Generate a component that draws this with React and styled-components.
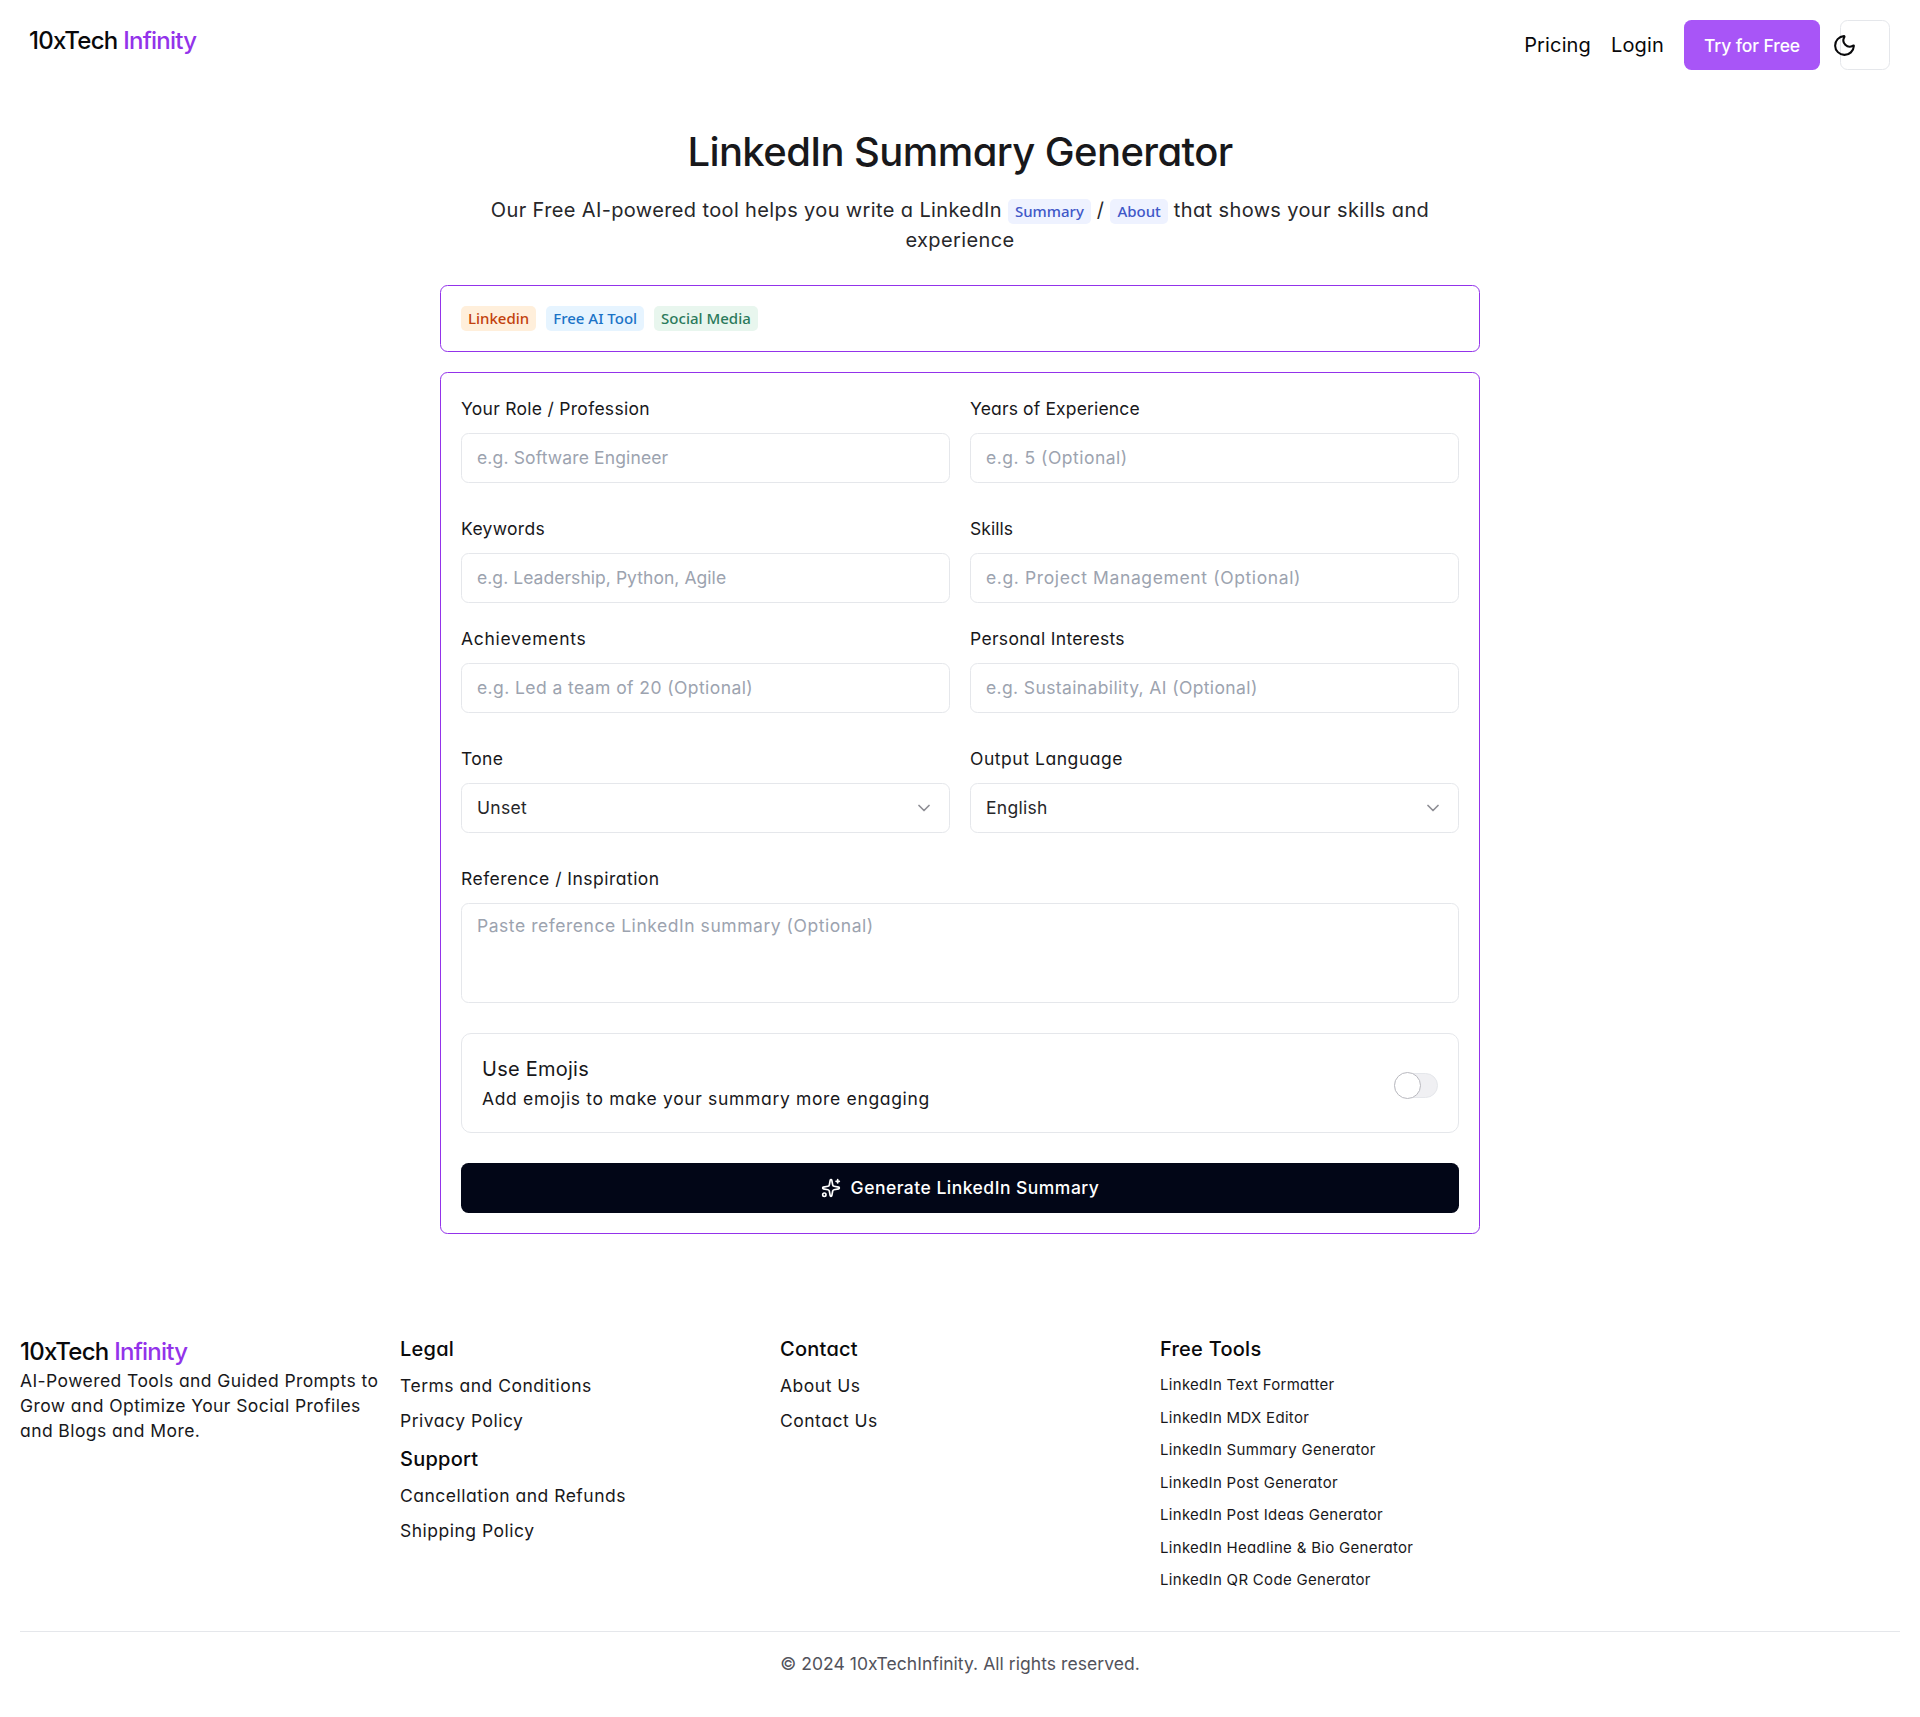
import React from "react";
import styled, { createGlobalStyle } from "styled-components";
import { Moon, ChevronDown, Sparkles } from "lucide-react";

const Global = createGlobalStyle`
  * { box-sizing: border-box; }
  html, body { margin: 0; padding: 0; background: #fff; }
  body { font-family: Inter, "Open Sans", sans-serif; color: #09090b; font-size: 17.5px; font-feature-settings: "cv11" 1; }
  button, input, textarea { font-feature-settings: "cv11" 1; }
`;

const Page = styled.div`display: flex; flex-direction: column; min-height: 1717px;`;

const Nav = styled.header`
  display: flex; justify-content: space-between; align-items: flex-start;
  height: 90px; padding: 20px 30px 20px 29px;
`;
const Brand = styled.div`
  font-size: 24px; font-weight: 550; line-height: ${p => (p.$lh || 40) + 2}px; margin-bottom: -2px; color: #09090b; letter-spacing: -0.75px;
  span { color: #9333ea; }
`;
const NavRight = styled.nav`display: flex; align-items: center; gap: 20px; height: 50px;`;
const NavLink = styled.a`font-size: 20px; color: #09090b; letter-spacing: 0.15px;`;
const TryBtn = styled.button`
  width: 136px; height: 50px; border: 0; border-radius: 7.5px; background: #a855f7; color: #fff;
  font: 500 17.5px Inter, sans-serif; letter-spacing: -0.1px;
`;
const ThemeBtn = styled.button`
  width: 50px; height: 50px; padding: 0; display: flex; align-items: center; background: #fff;
  border: 1px solid #e5e7eb; border-radius: 7.5px;
  svg { margin-left: -9.5px; color: #09090b; }
`;

const Main = styled.main`width: 1040px; margin: 0 auto;`;
const Title = styled.h1`
  margin: 37px 0 18px; font-size: 40px; line-height: 50px; font-weight: 550; text-align: center; color: #18181b;
  letter-spacing: -0.6px;
`;
const Sub = styled.p`
  margin: 0 0 30px; font-size: 20px; line-height: 30px; text-align: center; color: #27272a; letter-spacing: 0.37px;
`;
const Badge = styled.span`
  display: inline-block; height: 25px; padding: 0 7px; vertical-align: baseline;
  border-radius: 5px; font: 500 15px/25px "Noto Sans", sans-serif; letter-spacing: 0;
  background: ${p => p.$bg}; color: ${p => p.$fg};
`;
const Card = styled.section`
  border: 1.5px solid #9333ea; border-radius: 7.5px; padding: 19.5px 20px 20.5px; background: #fff;
`;
const TagCard = styled(Card)`display: flex; gap: 10px; height: 67px; margin-bottom: 20px; align-items: center;`;
const Rows = styled.div`display: flex; flex-direction: column;`;
const Row = styled.div`
  display: grid; grid-template-columns: 1fr 1fr; gap: 20px; margin-bottom: ${p => p.$mb}px;
`;
const Field = styled.label`display: flex; flex-direction: column; gap: 10px; margin-bottom: ${p => p.$mb || 0}px;`;
const LabelText = styled.span`
  font-size: 17.5px; line-height: 32px; margin-bottom: -2px; color: #18181b; letter-spacing: ${p => p.$ls ?? 0.32}px;
`;
const Input = styled.input`
  height: 50px; width: 100%; border: 1px solid #e5e7eb; border-radius: 7.5px; padding: 0 15px; background: #fff;
  font: 400 17.5px Inter, sans-serif; letter-spacing: ${p => p.$ls ?? 0.42}px; outline: none;
  &::placeholder { color: #9ca3af; opacity: 1; }
`;
const TextArea = styled.textarea`
  display: block; height: 100px; width: 100%; border: 1px solid #e5e7eb; border-radius: 7.5px; padding: 9px 15px; resize: none;
  font: 400 17.5px/25px Inter, sans-serif; letter-spacing: 0.54px; outline: none; background: #fff;
  &::placeholder { color: #9ca3af; opacity: 1; }
`;
const SelectBox = styled.button`
  height: 50px; width: 100%; display: flex; justify-content: space-between; align-items: center;
  border: 1px solid #e5e7eb; border-radius: 7.5px; padding: 0 15px; background: #fff;
  font: 400 17.5px Inter, sans-serif; letter-spacing: 0.28px; color: #27272a;
  svg { color: #71717a; opacity: 0.8; }
`;
const ToggleBox = styled.div`
  height: 100px; display: flex; justify-content: space-between; align-items: center; margin-bottom: 30px;
  border: 1px solid #e5e7eb; border-radius: 10px; padding: 2px 20px 0;
`;
const ToggleTitle = styled.div`font-size: 20px; line-height: 30px; color: #18181b; letter-spacing: 0.25px;`;
const ToggleDesc = styled.div`font-size: 17.5px; line-height: 30px; color: #18181b; letter-spacing: 0.66px;`;
const Switch = styled.button`
  width: 44px; height: 25px; padding: 0; margin-top: 3px; border: 1px solid #e5e7eb; border-radius: 13px; background: #f0f0f3; display: flex; align-items: center;
  &::before { content: ""; width: 25px; height: 25px; margin-left: -1px; border-radius: 50%; background: #fff; border: 1px solid #b9b9bf; }
`;
const Generate = styled.button`
  height: 50px; width: 100%; display: flex; align-items: center; justify-content: center; gap: 10px;
  border: 0; border-radius: 7.5px; background: #020617; color: #fff;
  font: 500 17.5px Inter, sans-serif; letter-spacing: 0.48px;
`;

const Footer = styled.footer`padding: 99px 20px 40px;`;
const FootGrid = styled.div`display: grid; grid-template-columns: repeat(5, 1fr); gap: 20px;`;
const Col = styled.div`display: flex; flex-direction: column;`;
const FootDesc = styled.p`margin: 0; font-size: 17.5px; line-height: 25px; color: #18181b; letter-spacing: 0.42px;`;
const FootHead = styled.h3`
  margin: 0 0 8px; font-size: 20px; line-height: 32px; font-weight: 550; color: #09090b; letter-spacing: 0.25px;
`;
const LinkList = styled.ul`
  list-style: none; margin: 0 0 10px; padding: 0; display: flex; flex-direction: column; gap: 10px;
  &:last-child { margin-bottom: 0; }
`;
const ToolList = styled(LinkList)`margin-top: 1px;`;
const FootLink = styled.li`
  font-size: ${p => p.$small ? 15 : 17.5}px; line-height: ${p => p.$small ? 22.5 : 25}px; color: #18181b;
  letter-spacing: ${p => p.$small ? 0.3 : 0.5}px;
`;
const Copy = styled.div`
  margin-top: 39px; border-top: 1px solid #e5e7eb; padding-top: 19px; text-align: center;
  font-size: 17.5px; line-height: 25px; color: #52525b; letter-spacing: 0.05px;
`;

const rows = [
  { mb: 30, f: [["Your Role / Profession", "e.g. Software Engineer", 0.28, 0.14], ["Years of Experience", "e.g. 5 (Optional)", 0.15, 0.5]] },
  { mb: 20, f: [["Keywords", "e.g. Leadership, Python, Agile", 0.32, 0.05], ["Skills", "e.g. Project Management (Optional)", 0.05, 0.62]] },
  { mb: 30, f: [["Achievements", "e.g. Led a team of 20 (Optional)", 0.72, 0.42], ["Personal Interests", "e.g. Sustainability, AI (Optional)", 0.32, 0.38]] },
];
const tools = ["LinkedIn Text Formatter", "LinkedIn MDX Editor", "LinkedIn Summary Generator", "LinkedIn Post Generator", "LinkedIn Post Ideas Generator", "LinkedIn Headline & Bio Generator", "LinkedIn QR Code Generator"];

export default function App() {
  return (
    <Page>
      <Global />
      <Nav>
        <Brand>10xTech <span>Infinity</span></Brand>
        <NavRight>
          <NavLink>Pricing</NavLink>
          <NavLink>Login</NavLink>
          <TryBtn>Try for Free</TryBtn>
          <ThemeBtn aria-label="Toggle theme"><Moon size={25} strokeWidth={2} /></ThemeBtn>
        </NavRight>
      </Nav>
      <Main>
        <Title>LinkedIn Summary Generator</Title>
        <Sub>
          Our Free AI-powered tool helps you write a LinkedIn <Badge $bg="#eef2ff" $fg="#4058c8">Summary</Badge> / <Badge $bg="#eef2ff" $fg="#4058c8">About</Badge> that shows your skills and<br />experience
        </Sub>
        <TagCard>
          <Badge $bg="#ffefdb" $fg="#c2410c">Linkedin</Badge>
          <Badge $bg="#e6f4ff" $fg="#1a73c7">Free AI Tool</Badge>
          <Badge $bg="#e8f6ee" $fg="#2b7a5b">Social Media</Badge>
        </TagCard>
        <Card>
          <Rows>
            {rows.map((r, i) => (
              <Row key={i} $mb={r.mb}>
                {r.f.map(([l, p, ll, pl]) => (
                  <Field key={l}><LabelText $ls={ll}>{l}</LabelText><Input placeholder={p} $ls={pl} /></Field>
                ))}
              </Row>
            ))}
            <Row $mb={30}>
              <Field as="div"><LabelText>Tone</LabelText><SelectBox>Unset<ChevronDown size={20} /></SelectBox></Field>
              <Field as="div"><LabelText $ls={0.55}>Output Language</LabelText><SelectBox>English<ChevronDown size={20} /></SelectBox></Field>
            </Row>
            <Field $mb={30}><LabelText $ls={0.48}>Reference / Inspiration</LabelText><TextArea placeholder="Paste reference LinkedIn summary (Optional)" /></Field>
            <ToggleBox>
              <div>
                <ToggleTitle>Use Emojis</ToggleTitle>
                <ToggleDesc>Add emojis to make your summary more engaging</ToggleDesc>
              </div>
              <Switch role="switch" aria-checked="false" />
            </ToggleBox>
            <Generate><Sparkles size={20} />Generate LinkedIn Summary</Generate>
          </Rows>
        </Card>
      </Main>
      <Footer>
        <FootGrid>
          <Col>
            <Brand $lh={35}>10xTech <span>Infinity</span></Brand>
            <FootDesc>AI-Powered Tools and Guided Prompts to Grow and Optimize Your Social Profiles and Blogs and More.</FootDesc>
          </Col>
          <Col>
            <FootHead>Legal</FootHead>
            <LinkList><FootLink>Terms and Conditions</FootLink><FootLink>Privacy Policy</FootLink></LinkList>
            <FootHead>Support</FootHead>
            <LinkList><FootLink>Cancellation and Refunds</FootLink><FootLink>Shipping Policy</FootLink></LinkList>
          </Col>
          <Col>
            <FootHead>Contact</FootHead>
            <LinkList><FootLink>About Us</FootLink><FootLink>Contact Us</FootLink></LinkList>
          </Col>
          <Col>
            <FootHead>Free Tools</FootHead>
            <ToolList>{tools.map(t => <FootLink key={t} $small>{t}</FootLink>)}</ToolList>
          </Col>
        </FootGrid>
        <Copy>© 2024 10xTechInfinity. All rights reserved.</Copy>
      </Footer>
    </Page>
  );
}
